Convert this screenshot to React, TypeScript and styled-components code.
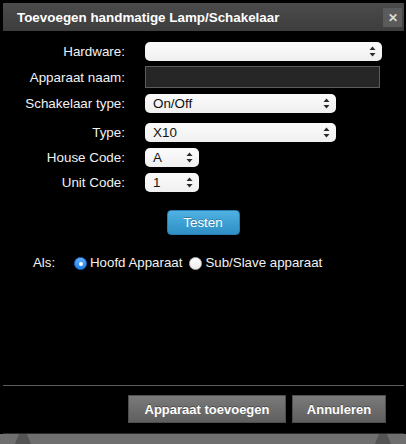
import React from 'react';
import styled, { createGlobalStyle } from 'styled-components';

const GlobalStyle = createGlobalStyle`
  html, body {
    margin: 0;
    padding: 0;
    background: #000;
  }
  body {
    font-family: "Liberation Sans", Arial, sans-serif;
  }
`;

const Dialog = styled.div`
  width: 406px;
  height: 444px;
  background: #000;
  display: flex;
  flex-direction: column;
  overflow: hidden;
`;

const TitleBar = styled.div`
  margin: 3px 2px 0 3px;
  height: 28px;
  background: linear-gradient(#4b4b4b, #3d3d3d);
  display: flex;
  align-items: center;
  justify-content: space-between;
  padding: 0 2px 0 14px;
`;

const Title = styled.span`
  color: #fff;
  font-size: 13.4px;
  font-weight: bold;
`;

const CloseButton = styled.div`
  width: 19px;
  height: 19px;
  background: #5b5b5b;
  color: #dcdcdc;
  font-size: 12px;
  font-weight: bold;
  display: flex;
  align-items: center;
  justify-content: center;
  margin-top: 1px;
`;

const Content = styled.div`
  flex: 1;
  display: flex;
  flex-direction: column;
`;

const Row = styled.div<{ $mt: number }>`
  display: flex;
  align-items: center;
  margin-top: ${p => p.$mt}px;
`;

const Label = styled.label`
  width: 125px;
  margin-right: 20px;
  text-align: right;
  color: #f2f2f2;
  font-size: 13.4px;
`;

const Select = styled.div<{ $w: number }>`
  width: ${p => p.$w}px;
  height: 19px;
  box-sizing: border-box;
  background: linear-gradient(#fbfbfb, #f0f0f0);
  border-radius: 5px;
  display: flex;
  align-items: center;
  justify-content: space-between;
  padding: 0 6px 0 8px;
  color: #111;
  font-size: 13.4px;
`;

const TextInput = styled.div`
  width: 235px;
  height: 22px;
  box-sizing: border-box;
  background: #262626;
  border: 1px solid #5c5c5c;
`;

const CenterRow = styled.div`
  display: flex;
  justify-content: center;
  margin-top: 18px;
`;

const BlueButton = styled.div`
  width: 73px;
  height: 25px;
  box-sizing: border-box;
  border-radius: 4px;
  border: 1px solid #2a7db0;
  background: linear-gradient(#4fb1e2, #2f8fc6);
  color: #fff;
  font-size: 13.4px;
  display: flex;
  align-items: center;
  justify-content: center;
  text-shadow: 0 -1px 0 rgba(0, 0, 0, 0.25);
`;

const RadioRow = styled.div`
  display: flex;
  align-items: center;
  margin-top: 20px;
  padding-left: 33px;
  color: #f2f2f2;
  font-size: 13.3px;
`;

const AlsLabel = styled.span`
  width: 41px;
`;

const Radio = styled.span<{ $checked?: boolean }>`
  width: 13px;
  height: 13px;
  box-sizing: border-box;
  border-radius: 50%;
  margin: 2px 3px 0 0;
  display: flex;
  align-items: center;
  justify-content: center;
  background: ${p => (p.$checked ? 'linear-gradient(#62b0ff, #1f7de6)' : 'linear-gradient(#ffffff, #ececec)')};
  border: 1px solid ${p => (p.$checked ? '#1a6fd0' : '#bdbdbd')};

  &::after {
    content: '';
    display: ${p => (p.$checked ? 'block' : 'none')};
    width: 4px;
    height: 4px;
    border-radius: 50%;
    background: #fff;
  }
`;

const RadioText = styled.span`
  margin-right: 7px;
`;

const Footer = styled.div`
  margin: 0 2px 0 3px;
  border-top: 1px solid #5e5e5e;
  border-bottom: 1px solid #2a2a2a;
  height: 49px;
  box-sizing: border-box;
  display: flex;
  justify-content: flex-end;
  align-items: flex-start;
  gap: 6px;
  padding: 9px 18px 0 0;
`;

const GrayButton = styled.div<{ $w: number }>`
  width: ${p => p.$w}px;
  height: 28px;
  box-sizing: border-box;
  background: linear-gradient(#7a7a7a, #5f5f5f);
  border: 1px solid #4e4e4e;
  color: #fff;
  font-size: 13px;
  font-weight: bold;
  display: flex;
  align-items: center;
  justify-content: center;
  text-shadow: 0 -1px 0 rgba(0, 0, 0, 0.35);
`;

const BottomStrip = styled.div`
  height: 10px;
  background: #6f6f6f;
  display: flex;
  justify-content: space-between;
  padding: 0 15px;
`;

const Tab = styled.span`
  width: 16px;
  height: 10px;
  background: #545454;
  clip-path: polygon(25% 0, 75% 0, 100% 100%, 0 100%);
`;

const Arrows = () => (
  <svg width="7" height="11" viewBox="0 0 7 11">
    <path d="M3.5 0.5 L6.5 4 H0.5 Z" fill="#2b2b2b" />
    <path d="M3.5 10.5 L6.5 7 H0.5 Z" fill="#2b2b2b" />
  </svg>
);

export default function App() {
  return (
    <>
      <GlobalStyle />
      <Dialog>
        <TitleBar>
          <Title>Toevoegen handmatige Lamp/Schakelaar</Title>
          <CloseButton>✕</CloseButton>
        </TitleBar>
        <Content>
          <Row $mt={11}>
            <Label>Hardware:</Label>
            <Select $w={237}>
              <span />
              <Arrows />
            </Select>
          </Row>
          <Row $mt={5}>
            <Label>Apparaat naam:</Label>
            <TextInput />
          </Row>
          <Row $mt={6}>
            <Label>Schakelaar type:</Label>
            <Select $w={191}>
              <span>On/Off</span>
              <Arrows />
            </Select>
          </Row>
          <Row $mt={10}>
            <Label>Type:</Label>
            <Select $w={191}>
              <span>X10</span>
              <Arrows />
            </Select>
          </Row>
          <Row $mt={6}>
            <Label>House Code:</Label>
            <Select $w={54}>
              <span>A</span>
              <Arrows />
            </Select>
          </Row>
          <Row $mt={6}>
            <Label>Unit Code:</Label>
            <Select $w={54}>
              <span>1</span>
              <Arrows />
            </Select>
          </Row>
          <CenterRow>
            <BlueButton>Testen</BlueButton>
          </CenterRow>
          <RadioRow>
            <AlsLabel>Als:</AlsLabel>
            <Radio $checked />
            <RadioText>Hoofd Apparaat</RadioText>
            <Radio />
            <RadioText>Sub/Slave apparaat</RadioText>
          </RadioRow>
        </Content>
        <Footer>
          <GrayButton $w={158}>Apparaat toevoegen</GrayButton>
          <GrayButton $w={94}>Annuleren</GrayButton>
        </Footer>
        <BottomStrip>
          <Tab />
          <Tab />
        </BottomStrip>
      </Dialog>
    </>
  );
}
